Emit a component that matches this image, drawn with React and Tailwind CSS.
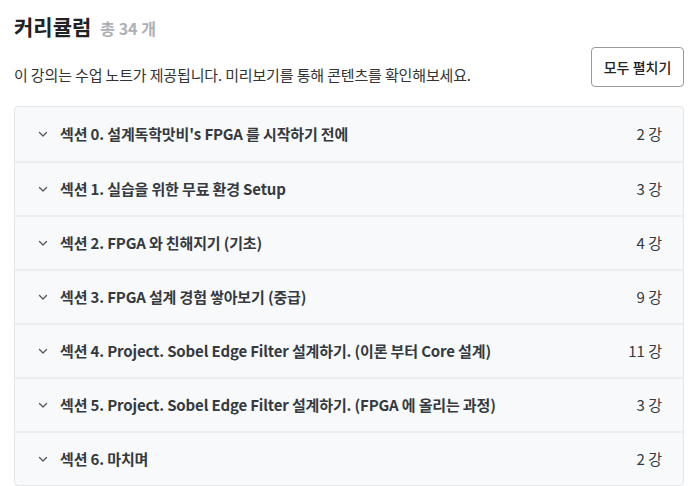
import React from "react";

const sections = [
  ["섹션 0. 설계독학맛비's FPGA 를 시작하기 전에", "2 강"],
  ["섹션 1. 실습을 위한 무료 환경 Setup", "3 강"],
  ["섹션 2. FPGA 와 친해지기 (기초)", "4 강"],
  ["섹션 3. FPGA 설계 경험 쌓아보기 (중급)", "9 강"],
  ["섹션 4. Project. Sobel Edge Filter 설계하기. (이론 부터 Core 설계)", "11 강"],
  ["섹션 5. Project. Sobel Edge Filter 설계하기. (FPGA 에 올리는 과정)", "3 강"],
  ["섹션 6. 마치며", "2 강"],
];

function Chevron() {
  return (
    <svg width="10" height="10" viewBox="0 0 10 10" fill="none" className="shrink-0">
      <path d="M1.5 3.5l3.5 3.5 3.5-3.5" stroke="#555" strokeWidth="1.3" strokeLinecap="round" strokeLinejoin="round" />
    </svg>
  );
}

export default function App() {
  return (
    <div
      className="w-[691px] h-[486px] bg-white pl-[14px] pr-[7px] pt-[9px] text-[#212529]"
      style={{ fontFamily: '"Noto Sans CJK KR", "Noto Sans", sans-serif' }}
    >
      <div className="flex items-baseline gap-[9px] h-[34px]">
        <h2 className="text-[21px] font-bold text-[#222] leading-[34px]">커리큘럼</h2>
        <span className="text-[16px] font-bold text-[#abb0b5]">총 34 개</span>
      </div>
      <div className="flex items-end justify-between mt-[4px] pb-[19px]">
        <p className="text-[15px] tracking-[-0.15px] text-[#333] leading-[20px] mb-[2px]">
          이 강의는 수업 노트가 제공됩니다. 미리보기를 통해 콘텐츠를 확인해보세요.
        </p>
        <button className="w-[93px] h-[40px] border border-[#9a9a9a] rounded-[4px] text-[14px] font-medium text-[#222] bg-white">
          모두 펼치기
        </button>
      </div>
      <div className="border border-[#e4e6e8] rounded-[4px] bg-[#f8f9fa] w-[670px] overflow-hidden">
        {sections.map(([t, c], i) => (
          <div
            key={i}
            className={`flex items-center h-[54px] pl-[23px] pr-[21px] ${i > 0 ? "border-t-2 border-[#eceef0]" : ""}`}
          >
            <Chevron />
            <span className="ml-[12px] text-[15px] tracking-[-0.15px] font-bold text-[#343a40] flex-1">{t}</span>
            <span className="text-[15px] text-[#343a40]">{c}</span>
          </div>
        ))}
      </div>
    </div>
  );
}
